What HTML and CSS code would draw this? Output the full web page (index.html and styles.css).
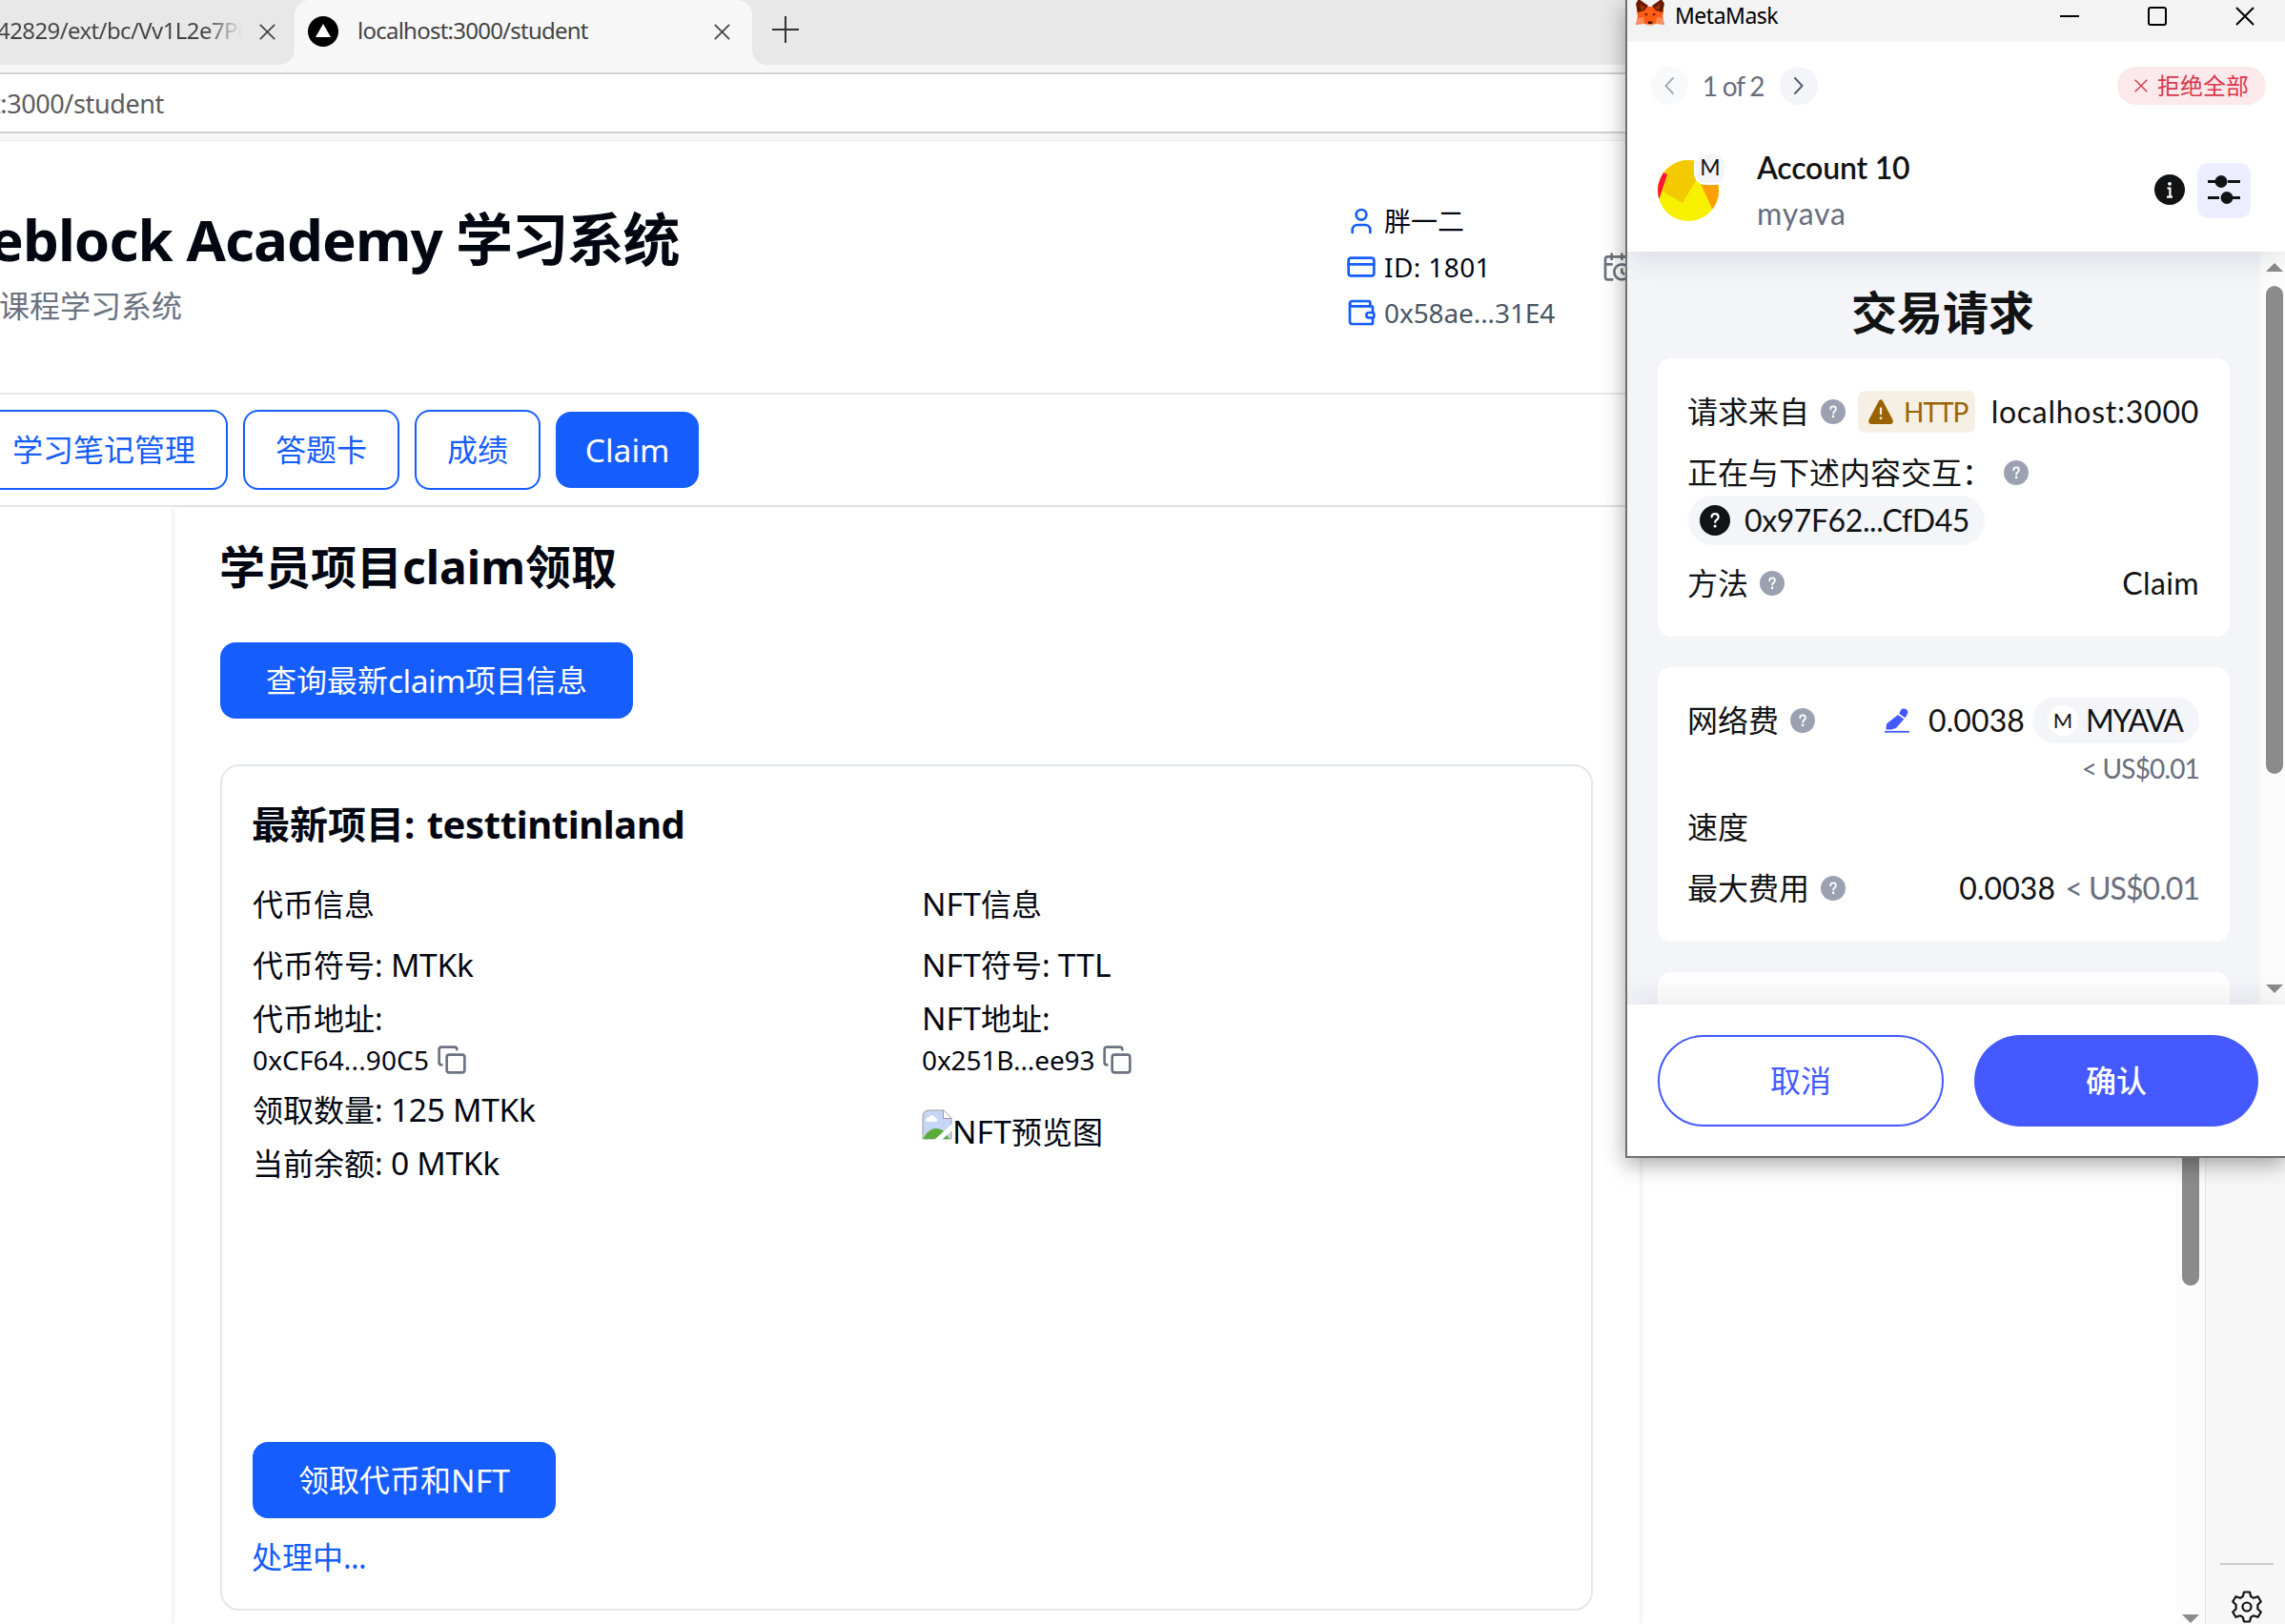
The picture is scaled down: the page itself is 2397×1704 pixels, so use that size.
FILE: index.html
```html
<!DOCTYPE html>
<html lang="zh-CN">
<head>
<meta charset="utf-8">
<title>localhost:3000/student</title>
<link rel="stylesheet" href="styles.css">
</head>
<body>
<svg width="0" height="0" class="defs" aria-hidden="true">
  <symbol id="help" viewBox="0 0 32 32"><circle cx="16" cy="16" r="16" fill="currentColor"/><path d="M12.600 12.600c0-2 1.500-3.400 3.500-3.400s3.500 1.300 3.500 3.200c0 1.500-.8 2.200-1.700 2.900-1 .8-1.700 1.300-1.700 2.700" fill="none" stroke="#fff" stroke-width="2.200" stroke-linecap="round"/><circle cx="16.100" cy="22" r="1.600" fill="#fff"/></symbol>
  <symbol id="copy" viewBox="0 0 24 24"><g fill="none" stroke="currentColor" stroke-width="2" stroke-linecap="round" stroke-linejoin="round"><rect x="8" y="8" width="14" height="14" rx="2"/><path d="M4 16c-1.100 0-2-.9-2-2V4c0-1.100.9-2 2-2h10c1.100 0 2 .9 2 2"/></g></symbol>
  <symbol id="cross" viewBox="0 0 20 20"><path d="M1 1l18 18M19 1L1 19" fill="none" stroke="currentColor" stroke-width="2"/></symbol>
</svg>

<div class="browser">
  <div class="tabs">
    <div class="tab tab-idle"><span class="tab-text fade">42829/ext/bc/Vv1L2e7Pc</span><svg class="x16"><use href="#cross"/></svg></div>
    <div class="tab tab-active">
      <svg class="fav" viewBox="0 0 32 32"><circle cx="16" cy="16" r="16"/><path d="M16 8l8 14H8z" fill="#fff"/></svg>
      <span class="tab-text">localhost:3000/student</span>
      <svg class="x16"><use href="#cross"/></svg>
    </div>
    <div class="tab-rest"><svg class="plus" viewBox="0 0 28 28"><path d="M14 0v28M0 14h28" stroke="#333" stroke-width="2"/></svg></div>
  </div>
  <div class="address"><span class="url"><b>t</b>:3000/student</span></div>

  <div class="view">
    <main class="page">
      <header class="top">
        <div class="brand">
          <h1><span class="h1l">eblock Academy</span> 学习系统</h1>
          <p>课程学习系统</p>
        </div>
        <div class="user">
          <div><svg class="i32" viewBox="0 0 24 24"><path d="M19 21v-2a4 4 0 0 0-4-4H9a4 4 0 0 0-4 4v2"/><circle cx="12" cy="7" r="4"/></svg><span>胖一二</span></div>
          <div><svg class="i32" viewBox="0 0 24 24"><rect x="2" y="5" width="20" height="14" rx="2"/><path d="M2 10h20"/></svg><span class="id">ID: 1801</span></div>
          <div><svg class="i32" viewBox="0 0 24 24"><path d="M19 7V4a1 1 0 0 0-1-1H5a2 2 0 0 0 0 4h15a1 1 0 0 1 1 1v4h-3a2 2 0 0 0 0 4h3a1 1 0 0 0 1-1v-2a1 1 0 0 0-1-1"/><path d="M3 5v14a2 2 0 0 0 2 2h15a1 1 0 0 0 1-1v-4"/></svg><span class="addr">0x58ae...31E4</span></div>
        </div>
        <svg class="i32 cal" viewBox="0 0 24 24"><path d="M21 7.500V6a2 2 0 0 0-2-2H5a2 2 0 0 0-2 2v14a2 2 0 0 0 2 2h3.500"/><path d="M16 2v4M8 2v4M3 10h5M17.500 17.500 16 16.300V14"/><circle cx="16" cy="16" r="6"/></svg>
      </header>
      <nav class="menu">
        <a class="btn line">学习笔记管理</a><a class="btn line">答题卡</a><a class="btn line">成绩</a><a class="btn solid current"><span class="l">Claim</span></a>
      </nav>
      <section class="content">
        <h2>学员项目<span class="h2l">claim</span>领取</h2>
        <a class="btn solid wide">查询最新<span class="l claim2">claim</span>项目信息</a>
        <div class="card">
          <h3>最新项目: <span class="h3l">testtintinland</span></h3>
          <div class="cols">
            <div class="col">
              <p class="head">代币信息</p>
              <p>代币符号: <span class="l m">MTKk</span></p>
              <p>代币地址:</p>
              <div class="hash"><span>0xCF64...90C5</span><svg><use href="#copy"/></svg></div>
              <p>领取数量: <span class="l m">125 MTKk</span></p>
              <p>当前余额: <span class="l m">0 MTKk</span></p>
            </div>
            <div class="col">
              <p class="head"><span class="l n">NFT</span>信息</p>
              <p><span class="l n">NFT</span>符号: <span class="l n">TTL</span></p>
              <p><span class="l n">NFT</span>地址:</p>
              <div class="hash hash2"><span>0x251B...ee93</span><svg><use href="#copy"/></svg></div>
              <div class="preview">
                <svg viewBox="0 0 32 32"><path d="M1 8q0-7 7-7h15l8 8v22H1z" fill="#c6d6f6" stroke="#9b9b9b" stroke-width="1"/><path d="M4 11c0-2 2-3 4-3 1-3 6-2 6 1 3 0 3 4 1 4H6c-1 0-2-1-2-2z" fill="#fff"/><path d="M1.500 31c3-7 8-11 14-11 6 0 11 5 13 11z" fill="#5aac36"/><path d="M22.500 1v8.500H31" fill="#fff" stroke="#9b9b9b"/><path d="M13 32L32 15v7L21 32z" fill="#fff"/></svg>
                <span><span class="l n">NFT</span>预览图</span>
              </div>
            </div>
          </div>
          <a class="btn solid wide get">领取代币和<span class="l n">NFT</span></a>
          <p class="busy">处理中<span>...</span></p>
        </div>
      </section>
    </main>
    <div class="scroll"><i class="thumb"></i><i class="down"></i></div>
    <aside class="side"><i class="rule"></i>
      <svg class="gear" viewBox="0 0 34 36"><path d="M14 2.500h6l1.200 4.600 2.800 1.600 4.600-1.500 3.200 5.300-3.400 3.300v4.400l3.400 3.300-3.200 5.300-4.600-1.500-2.800 1.600L20 33.500h-6l-1.200-4.600-2.800-1.600-4.600 1.500-3.200-5.300 3.400-3.300v-4.400L2.200 12.500l3.200-5.300L10 8.700l2.800-1.600z" fill="none" stroke="#111" stroke-width="2.200" stroke-linejoin="round"/><circle cx="17" cy="18" r="4.500" fill="none" stroke="#111" stroke-width="2.200"/></svg>
    </aside>
  </div>
</div>

<div class="popup">
  <div class="bar">
    <svg class="fox" viewBox="0 0 30 30"><path d="M2 2L12 8h6l10-6 1 11-1 5 2 9-8-2-4 3h-6l-4-3-8 2 2-9-1-5z" fill="#ff5c16"/><path d="M3 0l10 7-4 5-7 2L0 5z" fill="#661800"/><path d="M27 0L17 7l4 5 7 2 2-9z" fill="#661800"/><path d="M4 5l6 4-4 3zM26 5l-6 4 4 3z" fill="#a53208"/><path d="M8 19l-7 1v7l8-1zM22 19l7 1v7l-8-1z" fill="#ff8d5d"/><path d="M8.500 15l4 .5-1 2.500zM21.500 15l-4 .5 1 2.500z" fill="#661800"/><path d="M12.500 23.500h5l-.5 2.500h-4z" fill="#3a1408"/><path d="M9 26l3.500 3h5l3.500-3-4 .8h-4z" fill="#e8ddd6"/></svg>
    <span class="name">MetaMask</span>
    <svg class="w20" viewBox="0 0 20 20"><path d="M0 10h20" stroke="#000" stroke-width="2"/></svg>
    <svg class="w20" viewBox="0 0 20 20"><rect x="1" y="1" width="18" height="18" rx="2" fill="none" stroke="#000" stroke-width="2"/></svg>
    <svg class="w20"><use href="#cross"/></svg>
  </div>
  <div class="phead">
    <div class="pager">
      <span class="round off"><svg viewBox="0 0 10 18"><path d="M9 1L1.500 9 9 17"/></svg></span>
      <span class="count">1 of 2</span>
      <span class="round"><svg viewBox="0 0 10 18"><path d="M1 1l7.500 8L1 17"/></svg></span>
      <span class="reject"><svg><use href="#cross"/></svg>拒绝全部</span>
    </div>
    <div class="account">
      <div class="avatar">
        <svg viewBox="0 0 64 64"><clipPath id="c"><circle cx="32" cy="32" r="32"/></clipPath><g clip-path="url(#c)"><path d="M0 0h64v64H0z" fill="#f7f100"/><path d="M0 30L26 45 42 18 50 0H0z" fill="#f3c900"/><path d="M40 14L58 53l10-8V0H46z" fill="#fc9f00"/><path d="M0 10l10 5L1 42l-6-2z" fill="#ff1635"/></g></svg>
        <span class="badge">M</span>
      </div>
      <div class="who"><b>Account 10</b><span>myava</span></div>
      <svg class="info" viewBox="0 0 32 32"><circle cx="16" cy="16" r="16" fill="#121314"/><circle cx="16" cy="9.800" r="1.900" fill="#fff"/><path d="M13.500 14.500h2.900v9M13 23.600h6" fill="none" stroke="#fff" stroke-width="2.200"/></svg>
      <span class="tune"><svg viewBox="0 0 34 32"><path d="M0 7.500h10M21 7.500h13M0 24.500h12M22 24.500h12" stroke="#121314" stroke-width="3"/><circle cx="14" cy="7.500" r="6.500" fill="#121314"/><circle cx="20" cy="24.500" r="6.500" fill="#121314"/></svg></span>
    </div>
  </div>
  <div class="pbody">
    <div class="plist">
      <h4>交易请求</h4>
      <div class="pcard one">
        <div class="row"><span>请求来自</span><svg class="q"><use href="#help"/></svg><span class="http"><svg viewBox="0 0 26 26"><path d="M11 1.500c1-1.700 3-1.700 4 0l10.500 20c.9 1.700 0 4.500-2.500 4.500H3C.5 26-.4 23.200.5 21.500z" fill="#9a6300"/><path d="M13 8.500v7.500" stroke="#f6efe4" stroke-width="2.200"/><circle cx="13" cy="19.800" r="1.400" fill="#f6efe4"/></svg><span>HTTP</span></span><span class="end host">localhost:3000</span></div>
        <div class="row"><span>正在与下述内容交互：</span><svg class="q"><use href="#help"/></svg></div>
        <div class="hashpill"><svg><use href="#help"/></svg><span>0x97F62...CfD45</span></div>
        <div class="row"><span>方法</span><svg class="q"><use href="#help"/></svg><span class="end method">Claim</span></div>
      </div>
      <div class="pcard two">
        <div class="row"><span>网络费</span><svg class="q"><use href="#help"/></svg>
          <span class="end fee"><svg class="pen" viewBox="0 0 26 26"><path d="M17 2c2.500-3 9-1 7 4l-2.500 4.200-6.300-4.400zM14 7l6.300 4.500L12 21l-5 1.500H1.500L2 16.500z" fill="#4459ff"/><path d="M0 24.800h26" stroke="#4459ff" stroke-width="1.800"/></svg><span class="num">0.0038</span><span class="coin"><i>M</i><span>MYAVA</span></span></span></div>
        <div class="usd">&lt; US$0.01</div>
        <div class="row"><span>速度</span></div>
        <div class="row"><span>最大费用</span><svg class="q"><use href="#help"/></svg><span class="end max"><span class="num">0.0038</span><span class="usd2">&lt; US$0.01</span></span></div>
      </div>
      <div class="pcard three"></div>
    </div>
    <div class="pscroll"><i class="up"></i><i class="thumb2"></i><i class="down"></i></div>
  </div>
  <div class="pfoot"><a class="cancel">取消</a><a class="ok">确认</a></div>
</div>
</body>
</html>
```
FILE: styles.css
```css
*{box-sizing:border-box}
body{margin:0;width:2397px;height:1704px;overflow:hidden;position:relative;background:#fff;font:32px/48px "Noto Sans","Noto Sans CJK SC",sans-serif;color:#030712}
h1,h2,h3,h4,p{margin:0}
svg{display:block;flex:none}
i{font-style:normal;display:block}
.defs{position:absolute}

/* browser frame */
.browser{width:2397px;height:1704px;display:flex;flex-direction:column}
.tabs{height:68px;background:#f7f7f7;display:flex;flex:none}
.tab{display:flex;align-items:center;height:68px;padding-bottom:2px;color:#444}
.tab-idle{width:309px;background:#e8e8e8;border-bottom-right-radius:16px}
.tab-rest{flex:1;background:#e8e8e8;border-bottom-left-radius:16px}
.tab-text{font-size:24px;letter-spacing:-.76px;line-height:36px;white-space:nowrap;margin-top:-2px}
.fade{width:254px;overflow:hidden;margin-right:18px;text-indent:-3px;background:linear-gradient(90deg,#444 216px,#e8e8e8 254px);-webkit-background-clip:text;background-clip:text;color:transparent;letter-spacing:-.6px}
.x16{width:17px;height:17px}
.tab-active{width:480px;background:linear-gradient(90deg,#e8e8e8,#e8e8e8) 0 0/100% 20px no-repeat #f7f7f7;padding-left:14px}
.tab-active{background:#f7f7f7;border-radius:16px 16px 0 0;box-shadow:0 -20px 0 20px #e8e8e8;clip-path:inset(0)}
.fav{width:32px;height:32px;margin-right:20px}
.tab-active .tab-text{width:374px}
.plus{width:28px;height:28px;margin:17px 0 0 21px}
.address{height:80px;padding-top:8px;flex:none;background:#f7f7f7;border-bottom:1px solid #ececec}
.url{display:block;height:64px;border-top:2px solid #d0d0d0;border-bottom:2px solid #d0d0d0;background:#fff;font-size:27px;line-height:61px;letter-spacing:-.4px;color:#5c5c5c;text-indent:-9px}
.url b{font-weight:400;color:#111}
.view{flex:1;display:flex;min-height:0}

/* page */
.page{width:2283px;overflow:hidden;display:flex;flex-direction:column}
.top{height:266px;border-bottom:2px solid #e5e7eb;display:flex;align-items:flex-start;flex:none}
.brand{width:1412px;padding-top:61px}
h1{font-size:60px;line-height:84px;font-weight:700;letter-spacing:-1.5px;white-space:nowrap;margin-left:-11px}
.h1l{letter-spacing:-.92px}
.brand p{color:#6b7280;line-height:40px;margin:8px 0 0 -1px}
.user{width:268px;padding-top:60px;font-size:28px}
.user div{display:flex;align-items:center;gap:8px;height:48px}
.user span{margin-top:-1px}
.i32{width:32px;height:32px;fill:none;stroke:#155dfc;stroke-width:2;stroke-linecap:round;stroke-linejoin:round}
.id{letter-spacing:.4px}
.addr{color:#4b5563;letter-spacing:-.1px}
.cal{stroke:#6b7280;margin-top:116px}
.menu{height:118px;border-bottom:2px solid #e5e7eb;display:flex;align-items:center;gap:16px;margin-left:-21px;flex:none}
.btn{display:flex;align-items:center;justify-content:center;border-radius:16px;height:80px;white-space:pre}
.line{border:2px solid #155dfc;color:#155dfc;padding:0 32px;height:84px}
.solid{background:#155dfc;color:#fff}
.current{width:150px}
.l{font-size:33.6px;line-height:0}
.content{width:1537px;margin-left:183px;flex:1;padding:39px 48px 0;box-shadow:0 2px 6px rgba(0,0,0,.13)}
h2{font-size:48px;line-height:48px;font-weight:700;margin-left:-1px}
.h2l{letter-spacing:0}
.wide{width:433px;margin-top:55px}
.claim2{letter-spacing:-.5px}
.card{width:1440px;margin-top:48px;height:888px;border:2px solid #e5e7eb;border-radius:20px;padding:33px 32px 0}
h3{font-size:40px;line-height:56px;font-weight:700;margin-left:-1px}
.h3l{letter-spacing:-.41px;margin-left:2px}
.cols{display:grid;grid-template-columns:670px 670px;gap:32px;margin-top:32px;height:588px;align-items:start}
.col{display:grid;gap:8px}
.col .head{margin-bottom:8px}
.m{letter-spacing:-.3px}
.n{letter-spacing:.1px}
.hash{display:flex;align-items:center;gap:8px;height:40px;margin-top:-8px;font-size:28px;letter-spacing:.13px}
.hash svg{width:32px;height:32px}
.hash svg{color:#6b7280}
.hash span{margin-top:-3px}
.hash svg{margin-top:-2px}
.hash2{letter-spacing:-.12px}
.preview{display:flex;gap:0;margin-top:23px;height:48px}
.preview svg{width:32px;height:32px}
.get{width:318px;margin:0}
.busy{color:#155dfc;margin:17px 0 0 -1px}
.busy span{letter-spacing:-.6px}

.scroll{width:30px;background:#fcfcfc}
.thumb{width:18px;height:1049px;margin:152px 0 0 6px;background:#8b8b8b;border-radius:9px}
.down{width:18px;height:9px;background:#8b8b8b;clip-path:polygon(0 0,100% 0,50% 100%);margin:345px 0 0 6px}
.side{width:84px;background:#f7f7f7;border-left:1px solid #e5e5e5}
.rule{width:56px;height:2px;background:#cfcfcf;margin:1492px 0 0 15px}
.gear{width:34px;height:36px;margin:26px 0 0 26px}

/* wallet window */
.popup{position:absolute;left:1705px;top:0;width:692px;height:1215px;border:solid #6f6f6f;border-width:0 0 2px 2px;background:#fff;box-shadow:0 6px 22px rgba(0,0,0,.36);display:flex;flex-direction:column;font-family:Lato,"Noto Sans CJK SC",sans-serif;color:#121314}
.bar{height:44px;background:#f3f3f3;display:flex;padding:7px 0 0 9px;flex:none;font-family:"Noto Sans",sans-serif;color:#000}
.fox{width:30px;height:30px;margin-top:-8px}
.name{font-size:23px;letter-spacing:-.5px;line-height:20px;margin:-1px 0 0 11px;width:404px}
.w20{width:20px;height:20px;margin-right:72px}
.w20:last-child{margin:0}
.phead{height:220px;flex:none;background:#fff;box-shadow:0 6px 32px rgba(30,35,50,.13);z-index:1;clip-path:inset(0 0 -60px 0)}
.pager{display:flex;align-items:center;height:40px;margin:26px 20px 0 24px;font-size:28px;color:#686e7d}
.round{width:40px;height:40px;border-radius:50%;background:#f3f5f9;display:flex;align-items:center;justify-content:center}
.round svg{width:10px;height:18px;fill:none;stroke:#565c6b;stroke-width:2;stroke-linecap:round}
.off{opacity:.5}
.count{width:96px;text-align:center;letter-spacing:-1.2px;text-indent:-2px}
.reject{margin-left:auto;width:156px;height:40px;border-radius:20px;background:#fbe9eb;color:#d9374a;font-size:24px;display:flex;align-items:center;justify-content:center;gap:10px}
.reject svg{width:14px;height:14px}
.account{display:flex;margin:52px 36px 0 32px;align-items:flex-start}
.avatar{position:relative;width:64px;height:64px;margin-top:6px}
.avatar>svg{width:64px;height:64px}
.badge{position:absolute;left:38px;top:-8px;width:34px;height:34px;border:2px solid #fff;border-radius:12px;background:#f3f5f9;font-size:23px;line-height:27px;text-align:center}
.who{display:flex;flex-direction:column;margin-left:40px;width:416px}
.who b{font-weight:600;font-size:32px;line-height:48px;letter-spacing:-.2px;margin-top:-10px}
.who span{letter-spacing:.8px;color:#686e7d}
.info{width:32px;height:32px;margin:21px 13px 0 1px}
.tune{width:56px;height:58px;border-radius:12px;background:#ecedff;display:flex;align-items:center;justify-content:center;margin-top:9px}
.tune svg{width:34px;height:32px;margin-top:-3px}
.pbody{height:790px;flex:none;display:flex;background:#f3f5f9;overflow:hidden}
.plist{width:664px;padding:40px 32px 0;overflow:hidden}
h4{font-size:48px;line-height:48px;font-weight:700;text-align:center;margin:0 2px 24px 0}
.pcard{background:#fff;border-radius:14px;margin-bottom:32px;padding:24px 32px 0}
.one{height:292px}.two{height:288px}.three{height:100px}
.row{display:flex;align-items:center;height:64px;white-space:nowrap}
.row>span:first-child{margin-left:-1px}
.q{width:26px;height:26px;color:#9ca1b1;margin-left:12px}
.end{margin-left:auto}
.http{display:flex;align-items:center;gap:13px;width:123px;height:44px;border-radius:8px;background:#f6efe4;color:#9a6300;font-size:28px;letter-spacing:-1px;margin-left:13px;padding-left:11px}
.http>span{margin-left:-2px}
.http svg{width:26px;height:26px}
.host{letter-spacing:.74px}
.hashpill{display:flex;align-items:center;gap:15px;width:311px;height:52px;border-radius:26px;background:#f3f5f9;padding-left:12px;margin:-8px 0 8px;letter-spacing:-.42px}
.hashpill svg{width:32px;height:32px}
.method{letter-spacing:.37px}
.fee{display:flex;align-items:center}
.pen{width:26px;height:26px;margin-right:20px}
.num{letter-spacing:.1px}
.coin{display:flex;align-items:center;gap:8px;width:175px;height:48px;border-radius:24px;background:#f3f5f9;margin-left:8px;padding-left:16px;letter-spacing:-1.5px}
.coin i{width:32px;height:32px;border-radius:50%;background:#fff;font-size:22px;line-height:32px;text-align:center;letter-spacing:0}
.usd{height:48px;margin-top:-6px;margin-bottom:6px;text-align:right;font-size:28px;letter-spacing:-.84px;color:#686e7d}
.usd2{color:#686e7d;letter-spacing:-.96px;margin-left:10px}
.pscroll{width:26px;background:#fcfcfc}
.up{width:18px;height:9px;margin:12px 0 0 6px;background:#8b8b8b;clip-path:polygon(0 100%,100% 100%,50% 0)}
.thumb2{width:18px;height:512px;margin:15px 0 0 6px;border-radius:9px;background:#8b8b8b}
.pscroll .down{margin-top:221px}
.pfoot{flex:1;background:#fff;box-shadow:0 -6px 32px rgba(30,35,50,.09);z-index:1;clip-path:inset(-60px 0 0 0);padding:32px 28px 0 32px;display:flex;gap:32px}
.pfoot a{height:96px;border-radius:48px;display:flex;align-items:center;justify-content:center;width:300px}
.pfoot .cancel{border:2px solid #4459ff;color:#4459ff}
.pfoot .ok{background:#4459ff;color:#fff;width:298px;font-weight:500}
```
